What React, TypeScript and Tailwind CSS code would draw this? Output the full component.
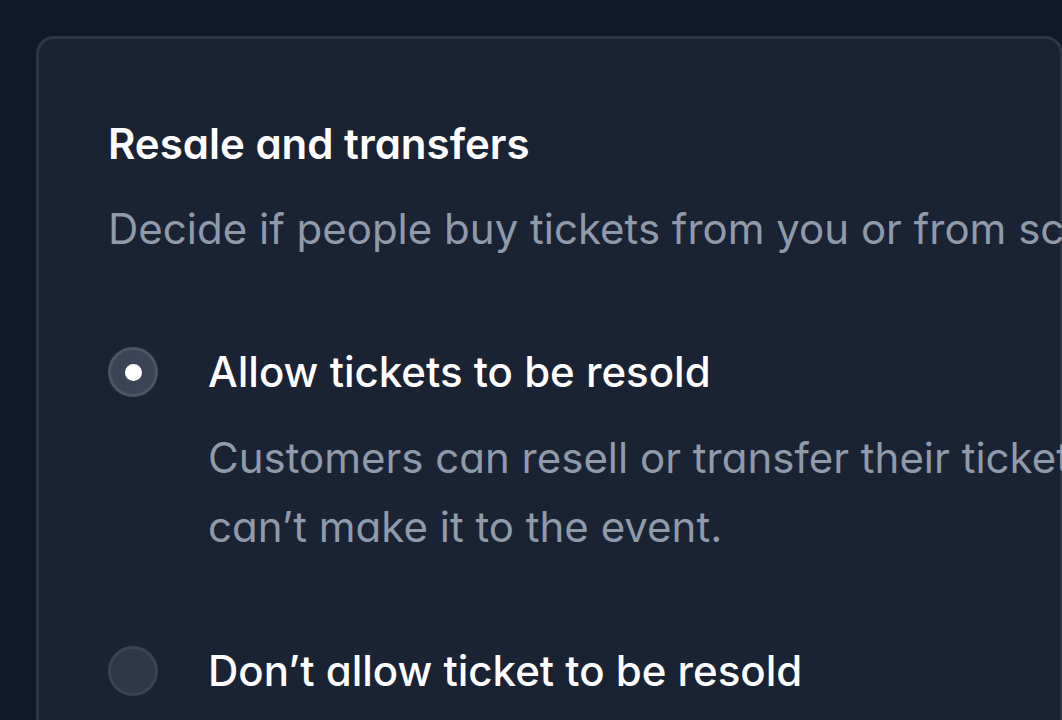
import React, { FC } from "react";

interface OptionProps {
  label: string;
  checked?: boolean;
  lines?: string[];
}

const RadioOption: FC<OptionProps> = ({ label, checked, lines }) => {
  return (
    <div className="flex items-start">
      <div className="flex h-[56px] w-[50px] flex-shrink-0 items-center">
        {checked ? (
          <div className="flex h-[50px] w-[50px] items-center justify-center rounded-full border-[3px] border-[#4a5466] bg-[#3a4456]">
            <div className="h-[17px] w-[17px] rounded-full bg-white"></div>
          </div>
        ) : (
          <div className="h-[50px] w-[50px] rounded-full border-[3px] border-[#394355] bg-[#2f3848]"></div>
        )}
      </div>
      <div className="ml-[50px] flex flex-col">
        <p className="whitespace-nowrap text-[42px] font-medium leading-[56px] text-white">
          {label}
        </p>
        {lines && (
          <div className="mt-[23px] flex flex-col">
            {lines.map((line) => (
              <p
                key={line}
                className="whitespace-nowrap text-[42px] leading-[69px] text-[#8f9aab]"
              >
                {line}
              </p>
            ))}
          </div>
        )}
      </div>
    </div>
  );
};

const App: FC = () => {
  return (
    <div className="h-[720px] w-[1062px] overflow-hidden bg-[#111827] pl-[36px] pt-[36px] font-['Inter',sans-serif] [font-feature-settings:'cv11']">
      <div className="h-[900px] w-[1027px] rounded-[18px] border-[3px] border-[#2c3647] bg-[#1a2333] pl-[69px] pt-[77px]">
        <h2 className="whitespace-nowrap text-[42px] font-semibold leading-[56px] text-white">
          Resale and transfers
        </h2>
        <p className="mt-[29px] whitespace-nowrap text-[42px] leading-[56px] text-[#8f9aab]">
          Decide if people buy tickets from you or from scalpers.
        </p>
        <div className="mt-[87px] flex flex-col gap-[82px]">
          <RadioOption
            checked
            label="Allow tickets to be resold"
            lines={[
              "Customers can resell or transfer their tickets if they",
              "can’t make it to the event.",
            ]}
          />
          <RadioOption label="Don’t allow ticket to be resold" />
        </div>
      </div>
    </div>
  );
};

export default App;
